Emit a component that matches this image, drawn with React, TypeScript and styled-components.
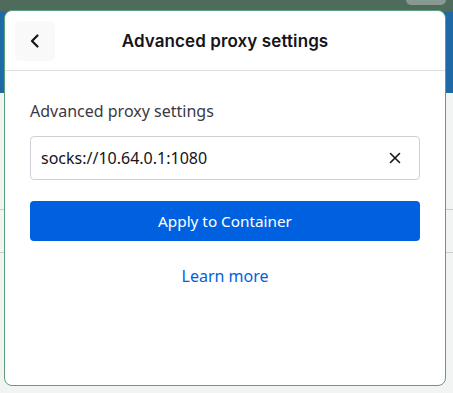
import React from "react";
import styled, { createGlobalStyle } from "styled-components";

const Global = createGlobalStyle`
  html, body { margin: 0; padding: 0; }
  body { width: 453px; height: 393px; overflow: hidden; background: #eceeed; font-family: "Noto Sans", "Open Sans", sans-serif; }
`;

const Page = styled.div`
  position: relative;
  width: 453px;
  height: 393px;
  display: flex;
  flex-direction: column;
  background: #eef0ef;
`;

const TopBar = styled.div`
  height: 12px;
  background: #4e6b5b;
  position: relative;
`;

const TopChip = styled.div`
  position: absolute;
  right: 7px;
  top: -6px;
  width: 40px;
  height: 11px;
  border-radius: 5px;
  background: #879a8f;
`;

const BlueBand = styled.div`
  height: 81px;
  background: #1f6aa6;
`;

const GrayArea = styled.div`
  flex: 1;
  display: flex;
  flex-direction: column;
  background: #f2f3f3;
`;

const GrayRow = styled.div<{ $h: number }>`
  height: ${(p) => p.$h}px;
  border-bottom: 1px solid #c9cccb;
`;

const Panel = styled.div`
  position: absolute;
  left: 4px;
  top: 10px;
  width: 442px;
  height: 376px;
  box-sizing: border-box;
  border: 1px solid #5c9f7a;
  border-radius: 8px;
  background: #fff;
  display: flex;
  flex-direction: column;
`;

const Header = styled.div`
  height: 60px;
  box-sizing: border-box;
  border-bottom: 1px solid #e0e0e2;
  display: flex;
  align-items: center;
  padding: 0 10px;
  position: relative;
`;

const BackButton = styled.button`
  width: 40px;
  height: 40px;
  border: none;
  border-radius: 5px;
  background: #f9f9fa;
  display: flex;
  align-items: center;
  justify-content: center;
  padding: 0;
  cursor: pointer;
`;

const Title = styled.h1`
  flex: 1;
  margin: 0 40px 0 0;
  text-align: center;
  font-family: "Inter", sans-serif;
  font-size: 17px;
  font-weight: 600;
  color: #15141a;
  letter-spacing: 0.1px;
`;

const Body = styled.div`
  padding: 30px 25px 0 25px;
  display: flex;
  flex-direction: column;
`;

const Label = styled.label`
  font-size: 16px;
  line-height: 20px;
  color: #3a3944;
  margin-bottom: 15px;
`;

const InputWrap = styled.div`
  height: 44px;
  box-sizing: border-box;
  border: 1px solid #cfcfd8;
  border-radius: 4px;
  display: flex;
  align-items: center;
  padding: 0 12px 0 10px;
  margin-bottom: 21px;
`;

const Input = styled.input`
  flex: 1;
  border: none;
  outline: none;
  font-family: "Noto Sans", sans-serif;
  font-size: 16px;
  color: #15141a;
  padding: 0;
  background: transparent;
`;

const ClearButton = styled.button`
  border: none;
  background: transparent;
  width: 24px;
  height: 24px;
  padding: 0;
  display: flex;
  align-items: center;
  justify-content: center;
`;

const PrimaryButton = styled.button`
  height: 40px;
  border: none;
  border-radius: 4px;
  background: #0061e0;
  color: #fff;
  font-family: "Noto Sans", sans-serif;
  font-size: 15.3px;
  margin-bottom: 25px;
`;

const LearnMore = styled.a`
  align-self: center;
  color: #0061e0;
  font-size: 16px;
  line-height: 20px;
  text-decoration: none;
`;

export default function App() {
  return (
    <>
      <Global />
      <Page>
        <TopBar>
          <TopChip />
        </TopBar>
        <BlueBand />
        <GrayArea>
          <GrayRow $h={116} />
          <GrayRow $h={42} />
        </GrayArea>
        <Panel>
          <Header>
            <BackButton aria-label="Back">
              <svg width="16" height="16" viewBox="0 0 16 16">
                <path d="M10.5 2.5 5 8l5.5 5.5" fill="none" stroke="#15141a" strokeWidth="2.2" strokeLinecap="round" strokeLinejoin="round" />
              </svg>
            </BackButton>
            <Title>Advanced proxy settings</Title>
          </Header>
          <Body>
            <Label>Advanced proxy settings</Label>
            <InputWrap>
              <Input defaultValue="socks://10.64.0.1:1080" />
              <ClearButton aria-label="Clear">
                <svg width="12" height="12" viewBox="0 0 12 12">
                  <path d="M1.5 1.5l9 9M10.5 1.5l-9 9" stroke="#15141a" strokeWidth="1.6" strokeLinecap="round" />
                </svg>
              </ClearButton>
            </InputWrap>
            <PrimaryButton>Apply to Container</PrimaryButton>
            <LearnMore href="#">Learn more</LearnMore>
          </Body>
        </Panel>
      </Page>
    </>
  );
}
